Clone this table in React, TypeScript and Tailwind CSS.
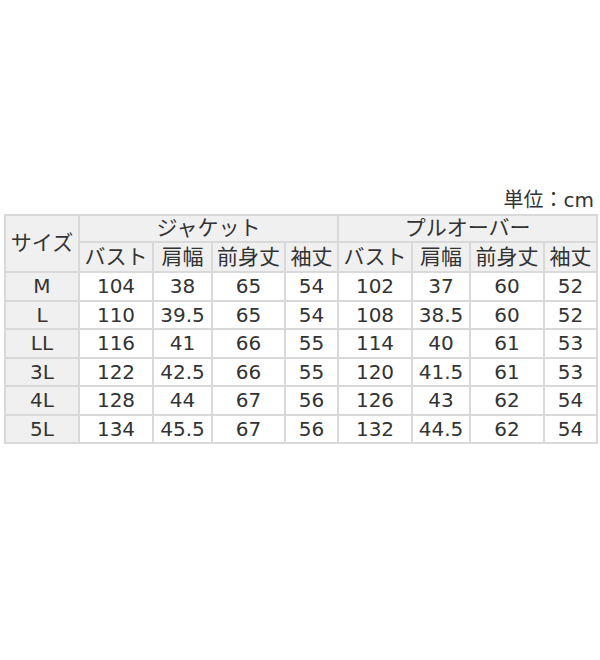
const rows = [
  ['M', '104', '38', '65', '54', '102', '37', '60', '52'],
  ['L', '110', '39.5', '65', '54', '108', '38.5', '60', '52'],
  ['LL', '116', '41', '66', '55', '114', '40', '61', '53'],
  ['3L', '122', '42.5', '66', '55', '120', '41.5', '61', '53'],
  ['4L', '128', '44', '67', '56', '126', '43', '62', '54'],
  ['5L', '134', '45.5', '67', '56', '132', '44.5', '62', '54'],
];

const colWidths = ['w-[74px]', 'w-[74px]', 'w-[59px]', 'w-[73px]', 'w-[53px]', 'w-[74px]', 'w-[58px]', 'w-[74px]', 'w-[53px]'];

const sub = ['バスト', '肩幅', '前身丈', '袖丈'];

const cell = 'border-2 border-[#d9d9d9] text-center p-0 leading-none';
const head = cell + ' bg-[#f0f0f0]';
// japanese labels are a touch bigger than the digits
const jp = 'text-[21px] font-normal whitespace-nowrap';

export default function App() {
  return (
    <div className="w-[600px] h-[660px] bg-white text-[#333] font-['DejaVu_Sans','Noto_Sans_CJK_JP',sans-serif]">
      <div className="pt-[188px] pr-[6px] text-right text-[20px] leading-[25px]">単位：cm</div>
      <table className="ml-[4px] mt-[1px] w-[592px] table-fixed border-collapse text-[20px]">
        <colgroup>
          {colWidths.map((w, i) => (
            <col key={i} className={w} />
          ))}
        </colgroup>
        <thead>
          <tr className="h-[27px]">
            <th rowSpan={2} className={`${head} ${jp}`}>サイズ</th>
            <th colSpan={4} className={`${head} ${jp}`}>ジャケット</th>
            <th colSpan={4} className={`${head} ${jp}`}>プルオーバー</th>
          </tr>
          <tr className="h-[30px]">
            {[...sub, ...sub].map((s, i) => (
              <th key={i} className={`${head} ${jp}`}>{s}</th>
            ))}
          </tr>
        </thead>
        <tbody>
          {rows.map((row) => (
            <tr key={row[0]} className="h-[28.5px]">
              {row.map((v, i) => (
                <td key={i} className={i === 0 ? head : cell}>{v}</td>
              ))}
            </tr>
          ))}
        </tbody>
      </table>
    </div>
  );
}
